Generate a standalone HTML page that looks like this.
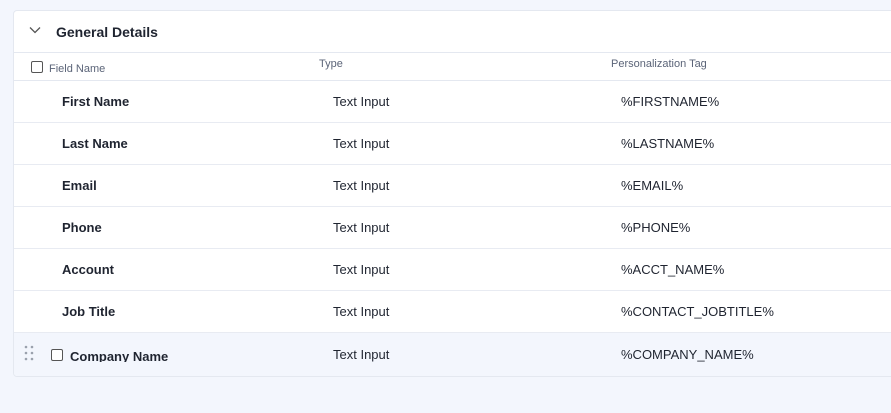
<!DOCTYPE html>
<html><head><style>
body{margin:0;width:891px;height:413px;background:#f3f6fd;font-family:"Liberation Sans",sans-serif;overflow:hidden;position:relative}
.card{position:absolute;left:13px;top:10px;width:900px;height:365px;background:#fff;border:1px solid #e4e8f0;border-radius:4px;overflow:hidden}
.hdr{height:41px;border-bottom:1px solid #e4e8f0;position:relative}
.hdr .t{position:absolute;left:42px;top:13px;font-weight:bold;font-size:14px;color:#1f2430}
.hdr svg{position:absolute;left:15px;top:15px}
.ch{height:27px;border-bottom:1px solid #e4e8f0;position:relative;font-size:11px;color:#5b6478}
.ch span{position:absolute}
.cb{position:absolute;width:10px;height:10px;border:1.2px solid #555;border-radius:2px;background:#fff}
.row{height:41px;border-bottom:1px solid #e8ebf2;position:relative;font-size:13px;color:#1f2430}
.row span{position:absolute;top:13px}
.n{left:48px;font-weight:bold}
.ty{left:319px}.tg{left:607px}
.last{background:#f3f6fd;height:44px;border-bottom:none}
</style></head><body>
<div class="card">
 <div class="hdr"><svg width="12" height="8" viewBox="0 0 12 8"><path d="M1 1.5l5 5 5-5" fill="none" stroke="#555" stroke-width="1.3"/></svg><span class="t">General Details</span></div>
 <div class="ch"><div class="cb" style="left:17px;top:8px"></div><span style="left:35px;top:10px">Field Name</span><span style="left:305px;top:5px">Type</span><span style="left:597px;top:5px">Personalization Tag</span></div>
 <div class="row"><span class="n">First Name</span><span class="ty">Text Input</span><span class="tg">%FIRSTNAME%</span></div>
 <div class="row"><span class="n">Last Name</span><span class="ty">Text Input</span><span class="tg">%LASTNAME%</span></div>
 <div class="row"><span class="n">Email</span><span class="ty">Text Input</span><span class="tg">%EMAIL%</span></div>
 <div class="row"><span class="n">Phone</span><span class="ty">Text Input</span><span class="tg">%PHONE%</span></div>
 <div class="row"><span class="n">Account</span><span class="ty">Text Input</span><span class="tg">%ACCT_NAME%</span></div>
 <div class="row"><span class="n">Job Title</span><span class="ty">Text Input</span><span class="tg">%CONTACT_JOBTITLE%</span></div>
 <div class="row last">
  <svg style="position:absolute;left:9px;top:12px" width="12" height="16"><g fill="#9aa1ad"><circle cx="3" cy="2" r="1.3"/><circle cx="9" cy="2" r="1.3"/><circle cx="3" cy="8" r="1.3"/><circle cx="9" cy="8" r="1.3"/><circle cx="3" cy="14" r="1.3"/><circle cx="9" cy="14" r="1.3"/></g></svg>
  <div class="cb" style="left:37px;top:16px;width:10px;height:10px"></div>
  <span class="n" style="left:56px;top:16px;height:13px;overflow:hidden;line-height:16px">Company Name</span>
  <span class="ty" style="top:14px">Text Input</span><span class="tg" style="top:14px">%COMPANY_NAME%</span>
 </div>
</div>
</body></html>
